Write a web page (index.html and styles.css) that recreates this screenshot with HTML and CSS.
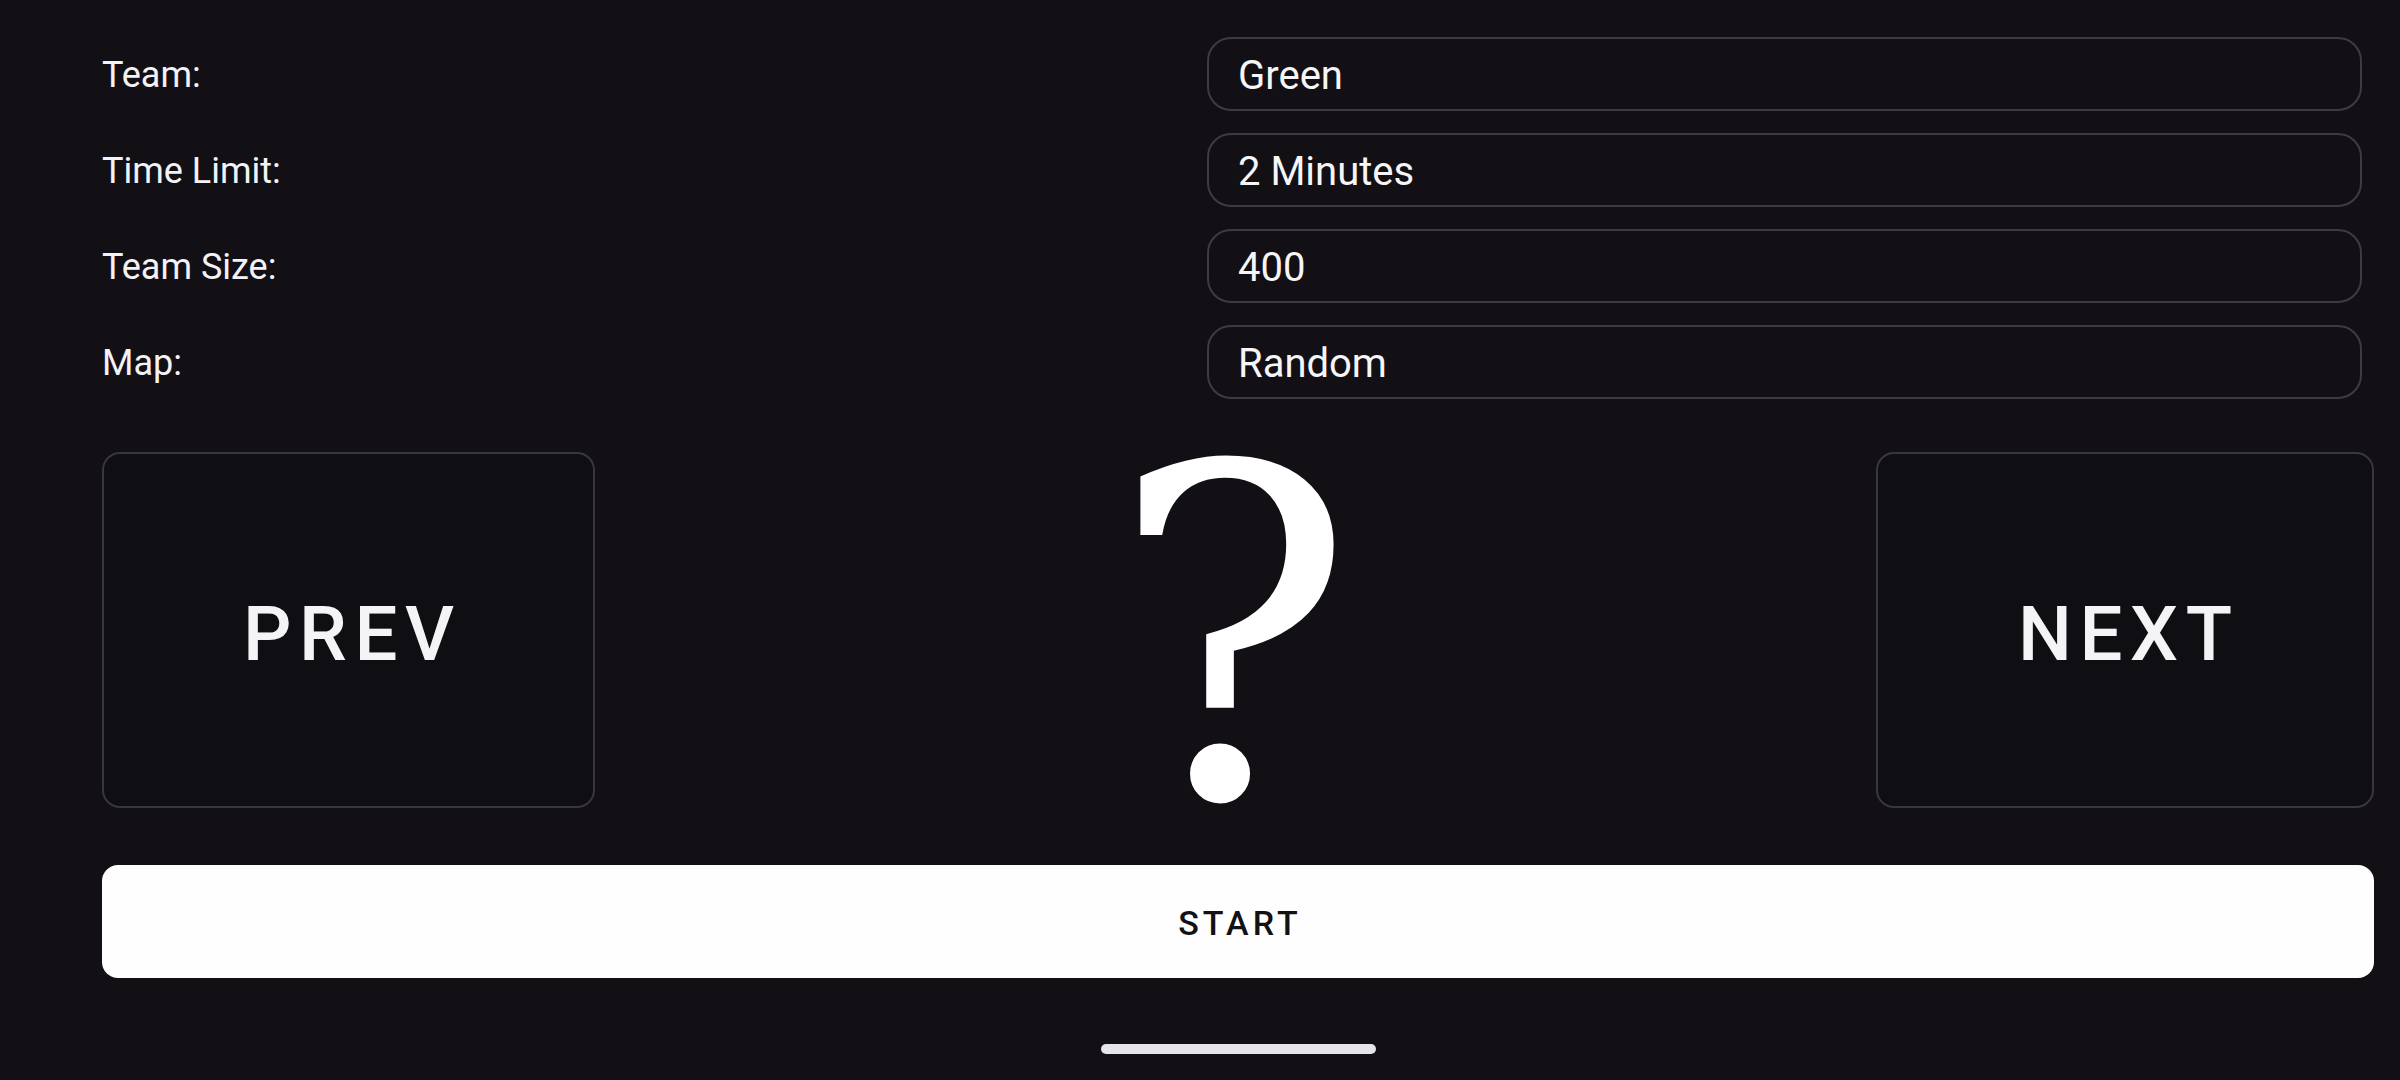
FILE: index.html
```html
<!DOCTYPE html>
<html lang="en">
<head>
<meta charset="utf-8">
<title>Game Setup</title>
<link rel="stylesheet" href="styles.css">
</head>
<body>
<main class="screen">
  <section class="form">
    <div class="label">Team:</div>
    <div class="field">Green</div>
    <div class="label">Time Limit:</div>
    <div class="field">2 Minutes</div>
    <div class="label">Team Size:</div>
    <div class="field">400</div>
    <div class="label">Map:</div>
    <div class="field">Random</div>
  </section>
  <section class="picker">
    <button class="nav-btn prev">PREV</button>
    <div class="map-preview"><span class="qmark">?</span></div>
    <button class="nav-btn next">NEXT</button>
  </section>
  <button class="start-btn">START</button>
  <div class="home-bar-row"><div class="home-bar"></div></div>
</main>
</body>
</html>
```
FILE: styles.css
```css
html, body {
  margin: 0;
  padding: 0;
  background: #121014;
  width: 2400px;
  height: 1080px;
  overflow: hidden;
}
.screen {
  box-sizing: border-box;
  width: 2400px;
  height: 1080px;
  padding: 37px 26px 0 102px;
  font-family: Roboto, "Noto Sans", sans-serif;
  color: #f3f2f6;
  display: flex;
  flex-direction: column;
}
.form {
  display: grid;
  grid-template-columns: 1105px 1155px;
  grid-auto-rows: 74px;
  row-gap: 22px;
}
.label {
  display: flex;
  align-items: center;
  font-size: 36px;
  padding-top: 2px;
}
.field {
  box-sizing: border-box;
  border: 2px solid #3d3c40;
  border-radius: 24px;
  display: flex;
  align-items: center;
  padding: 3px 0 0 29px;
  font-size: 40px;
  color: #f6f5f8;
}
.picker {
  margin-top: 53px;
  height: 356px;
  display: flex;
  justify-content: space-between;
  align-items: stretch;
}
.nav-btn {
  box-sizing: border-box;
  background: #0f0e12;
  border: 2px solid #38373b;
  border-radius: 18px;
  color: #f4f4f7;
  font-family: Roboto, "Noto Sans", sans-serif;
  font-weight: 500;
  font-size: 76px;
  letter-spacing: 0.1em;
  padding: 8px 0 0 0.1em;
}
.prev { width: 493px; }
.next { width: 498px; }
.map-preview {
  width: 356px;
  display: flex;
  justify-content: center;
  align-items: center;
}
.qmark {
  display: block;
  font-family: "DejaVu Serif", serif;
  font-size: 460px;
  line-height: 0.76;
  padding: 16px 6px 0 0;
  color: #ffffff;
}
.start-btn {
  margin-top: 57px;
  height: 113px;
  width: 100%;
  border: none;
  border-radius: 16px;
  background: #fefefe;
  color: #121114;
  font-family: Roboto, "Noto Sans", sans-serif;
  font-weight: 500;
  font-size: 34px;
  letter-spacing: 0.12em;
  padding: 2px 0 0 0.12em;
}
.home-bar-row {
  margin-top: 66px;
  display: flex;
  justify-content: center;
}
.home-bar {
  width: 275px;
  height: 10px;
  border-radius: 5px;
  background: #e6e5ea;
}
```
